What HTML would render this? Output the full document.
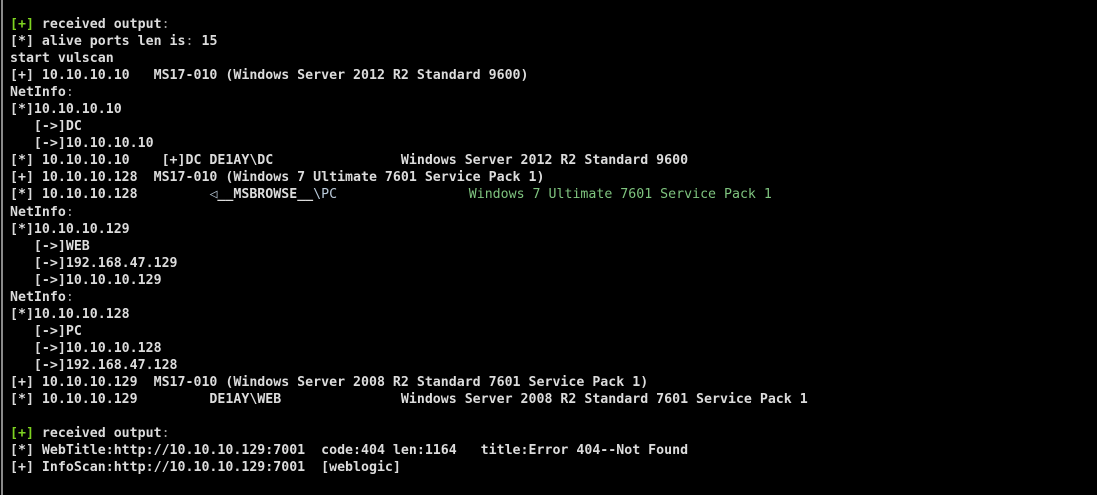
<!DOCTYPE html>
<html><head><meta charset="utf-8"><style>
html,body{margin:0;padding:0;background:#000;width:1097px;height:495px;overflow:hidden}
.b{position:absolute;left:1px;top:0;width:2px;height:495px;background:#8a8a8a}
pre{position:absolute;left:10px;top:16px;margin:0;font-family:"DejaVu Sans Mono","Liberation Mono",monospace;font-weight:bold;font-size:13.25px;line-height:17.04px;color:#dcdcdc}
.g{color:#7ed321}
.c{color:#a0a0a0;font-weight:normal}
.n{font-weight:normal;color:#b8c8d8}
.gr{font-weight:normal;color:#7fc47f;position:relative;left:4px}
</style></head><body><div class="b"></div><pre><span class="g">[+]</span> received output<span class="c">:</span>
[*] alive ports len is<span class="c">:</span> 15
start vulscan
[+] 10.10.10.10   MS17-010 (Windows Server 2012 R2 Standard 9600)
NetInfo<span class="c">:</span>
[*]10.10.10.10
   [-&gt;]DC
   [-&gt;]10.10.10.10
[*] 10.10.10.10    [+]DC DE1AY\DC                Windows Server 2012 R2 Standard 9600
[+] 10.10.10.128  MS17-010 (Windows 7 Ultimate 7601 Service Pack 1)
[*] 10.10.10.128         <span class="n">◁</span>__MSBROWSE__<span class="n">\PC</span>                <span class="gr">Windows 7 Ultimate 7601 Service Pack 1</span>
NetInfo<span class="c">:</span>
[*]10.10.10.129
   [-&gt;]WEB
   [-&gt;]192.168.47.129
   [-&gt;]10.10.10.129
NetInfo<span class="c">:</span>
[*]10.10.10.128
   [-&gt;]PC
   [-&gt;]10.10.10.128
   [-&gt;]192.168.47.128
[+] 10.10.10.129  MS17-010 (Windows Server 2008 R2 Standard 7601 Service Pack 1)
[*] 10.10.10.129         DE1AY\WEB               Windows Server 2008 R2 Standard 7601 Service Pack 1

<span class="g">[+]</span> received output<span class="c">:</span>
[*] WebTitle:http://10.10.10.129:7001  code:404 len:1164   title:Error 404--Not Found
[+] InfoScan:http://10.10.10.129:7001  [weblogic]
</pre></body></html>
